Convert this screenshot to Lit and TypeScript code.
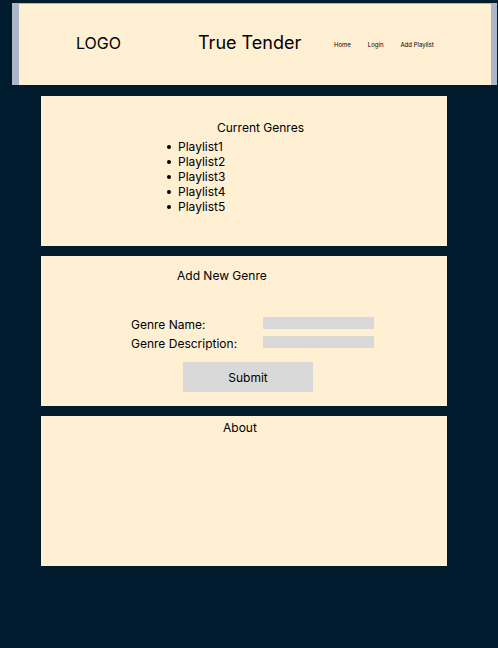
import { LitElement, html, css } from "lit";
import { customElement, state } from "lit/decorators.js";

@customElement("app-root")
export class AppRoot extends LitElement {
  static styles = css`
    :host {
      display: block;
      box-sizing: border-box;
      min-height: 100vh;
      padding: 3px 1px 12px 12px;
      background: #001b2e;
      color: #000;
      font-family: Inter, "Liberation Sans", sans-serif;
      font-size: 12px;
      line-height: 15px;
    }
    .header {
      display: grid;
      grid-template-columns: 122fr 136fr 157fr;
      align-items: center;
      box-sizing: border-box;
      min-height: 82px;
      padding-left: 57px;
      border: solid #adb6c4;
      border-width: 1px 6px 0 7px;
      background: #ffefd3;
    }
    .logo,
    .title {
      padding-bottom: 3px;
    }
    .logo {
      font-size: 16px;
      line-height: 20px;
    }
    .title {
      margin: 0;
      font-size: 18px;
      font-weight: 400;
      line-height: 22px;
      white-space: nowrap;
    }
    .nav {
      display: flex;
      gap: 17px;
      font-size: 6px;
      line-height: 8px;
      white-space: nowrap;
    }
    .nav a {
      color: inherit;
      text-decoration: none;
    }
    .panels {
      display: grid;
      gap: 10px;
      margin: 11px 50px 0 29px;
    }
    .panel {
      box-sizing: border-box;
      min-height: 150px;
      background: #ffefd3;
    }
    .genres {
      padding-top: 24px;
    }
    .add {
      padding-top: 12px;
    }
    .about {
      padding-top: 4px;
    }
    .heading {
      margin: 0;
      font-size: 12px;
      font-weight: 400;
    }
    .genres .heading {
      padding-left: 176px;
    }
    .add .heading {
      padding-left: 136px;
    }
    .about .heading {
      padding-left: 182px;
    }
    .list {
      margin: 4px 0 0;
      padding-left: 126px;
      list-style: none;
    }
    .item {
      display: flex;
      align-items: center;
      gap: 7px;
    }
    .item::before {
      content: "";
      width: 4px;
      height: 4px;
      border-radius: 50%;
      background: currentColor;
    }
    .form {
      display: grid;
      grid-template-columns: 132fr 111fr 73fr;
      row-gap: 4px;
      align-items: start;
      margin-top: 34px;
      padding-left: 90px;
    }
    .label {
      grid-column: 1;
      white-space: nowrap;
    }
    .input {
      grid-column: 2;
      box-sizing: border-box;
      width: 100%;
      height: 12px;
      padding: 0 2px;
      border: 0;
      border-radius: 0;
      background: #d9d9d9;
      font: inherit;
      font-size: 10px;
      line-height: 12px;
    }
    .submit {
      grid-column: 1 / -1;
      width: 130px;
      height: 30px;
      margin: 7px 0 0 52px;
      padding: 0;
      border: 0;
      background: #d9d9d9;
      color: inherit;
      font: inherit;
    }
  `;

  @state() private genres = ["Playlist1", "Playlist2", "Playlist3", "Playlist4", "Playlist5"];

  private addGenre(event: Event) {
    event.preventDefault();
    const form = event.target as HTMLFormElement;
    const name = String(new FormData(form).get("name") ?? "").trim();
    if (!name) return;
    this.genres = [...this.genres, name];
    form.reset();
  }

  render() {
    return html`
      <header class="header">
        <div class="logo">LOGO</div>
        <h1 class="title">True Tender</h1>
        <nav class="nav">
          <a href="#home">Home</a>
          <a href="#login">Login</a>
          <a href="#add">Add Playlist</a>
        </nav>
      </header>
      <main class="panels">
        <section class="panel genres">
          <h2 class="heading">Current Genres</h2>
          <ul class="list">
            ${this.genres.map((genre) => html`<li class="item">${genre}</li>`)}
          </ul>
        </section>
        <section class="panel add" id="add">
          <h2 class="heading">Add New Genre</h2>
          <form class="form" @submit=${this.addGenre}>
            <label class="label" for="name">Genre Name:</label>
            <input class="input" id="name" name="name" type="text" />
            <label class="label" for="description">Genre Description:</label>
            <input class="input" id="description" name="description" type="text" />
            <button class="submit" type="submit">Submit</button>
          </form>
        </section>
        <section class="panel about">
          <h2 class="heading">About</h2>
        </section>
      </main>
    `;
  }
}
